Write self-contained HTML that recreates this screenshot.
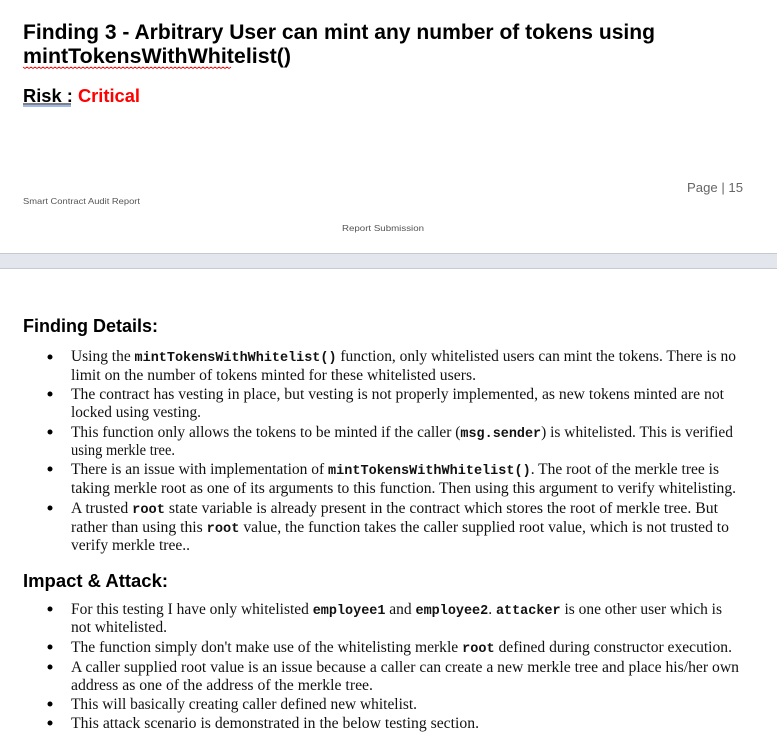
<!DOCTYPE html>
<html><head><meta charset="utf-8"><style>
html,body{margin:0;padding:0;background:#fff;width:777px;height:756px;overflow:hidden}
svg{display:block}
.h{font-family:"Liberation Sans",sans-serif;font-weight:bold;fill:#000}
.t{font-family:"Liberation Serif",serif;font-size:15.5px;fill:#111}
.m{font-family:"Liberation Mono",monospace;font-weight:bold;font-size:13.5px}
</style></head><body>
<svg width="777" height="756" xmlns="http://www.w3.org/2000/svg">
<text class="h" x="23" y="39" font-size="21" textLength="632" lengthAdjust="spacingAndGlyphs">Finding 3 - Arbitrary User can mint any number of tokens using</text>
<text class="h" x="23" y="63" font-size="21" textLength="268" lengthAdjust="spacingAndGlyphs">mintTokensWithWhitelist()</text>
<path d="M23 67 l2 1.5 l2 -1.5 l2 1.5 l2 -1.5 l2 1.5 l2 -1.5 l2 1.5 l2 -1.5 l2 1.5 l2 -1.5 l2 1.5 l2 -1.5 l2 1.5 l2 -1.5 l2 1.5 l2 -1.5 l2 1.5 l2 -1.5 l2 1.5 l2 -1.5 l2 1.5 l2 -1.5 l2 1.5 l2 -1.5 l2 1.5 l2 -1.5 l2 1.5 l2 -1.5 l2 1.5 l2 -1.5 l2 1.5 l2 -1.5 l2 1.5 l2 -1.5 l2 1.5 l2 -1.5 l2 1.5 l2 -1.5 l2 1.5 l2 -1.5 l2 1.5 l2 -1.5 l2 1.5 l2 -1.5 l2 1.5 l2 -1.5 l2 1.5 l2 -1.5 l2 1.5 l2 -1.5 l2 1.5 l2 -1.5 l2 1.5 l2 -1.5 l2 1.5 l2 -1.5 l2 1.5 l2 -1.5 l2 1.5 l2 -1.5 l2 1.5 l2 -1.5 l2 1.5 l2 -1.5 l2 1.5 l2 -1.5 l2 1.5 l2 -1.5 l2 1.5 l2 -1.5 l2 1.5 l2 -1.5 l2 1.5 l2 -1.5 l2 1.5 l2 -1.5 l2 1.5 l2 -1.5 l2 1.5 l2 -1.5 l2 1.5 l2 -1.5 l2 1.5 l2 -1.5 l2 1.5 l2 -1.5 l2 1.5 l2 -1.5 l2 1.5 l2 -1.5 l2 1.5 l2 -1.5 l2 1.5 l2 -1.5 l2 1.5 l2 -1.5 l2 1.5 l2 -1.5 l2 1.5 l2 -1.5 l2 1.5 l2 -1.5 l2 1.5 l2 -1.5" stroke="#e00" fill="none" stroke-width="0.8"/>
<line x1="23" y1="104" x2="71" y2="104" stroke="#000" stroke-width="1"/>
<line x1="23" y1="106" x2="71" y2="106" stroke="#3a6fd8" stroke-width="1"/>
<text class="h" x="23" y="102" font-size="18.5" textLength="117" lengthAdjust="spacingAndGlyphs">Risk : <tspan fill="#ff0000">Critical</tspan></text>
<text x="23" y="204" font-family="Liberation Sans,sans-serif" font-size="8.5" fill="#555" textLength="117" lengthAdjust="spacingAndGlyphs">Smart Contract Audit Report</text>
<text x="687" y="192" font-family="Liberation Sans,sans-serif" font-size="12.5" fill="#666" textLength="56" lengthAdjust="spacingAndGlyphs">Page | 15</text>
<text x="342" y="231" font-family="Liberation Sans,sans-serif" font-size="8.5" fill="#555" textLength="82" lengthAdjust="spacingAndGlyphs">Report Submission</text>
<rect x="0" y="253" width="777" height="15" fill="#e3e6ec"/>
<line x1="0" y1="253.5" x2="777" y2="253.5" stroke="#c6c9cf"/>
<line x1="0" y1="268.5" x2="777" y2="268.5" stroke="#c6c9cf"/>
<text class="h" x="23" y="332" font-size="18.5" textLength="135" lengthAdjust="spacingAndGlyphs">Finding Details:</text>
<g fill="#000">
<circle cx="50" cy="357" r="2.5"/><circle cx="50" cy="394" r="2.5"/><circle cx="50" cy="432" r="2.5"/><circle cx="50" cy="469" r="2.5"/><circle cx="50" cy="508" r="2.5"/>
<circle cx="50" cy="609" r="2.5"/><circle cx="50" cy="647" r="2.5"/><circle cx="50" cy="667" r="2.5"/><circle cx="50" cy="704" r="2.5"/><circle cx="50" cy="723" r="2.5"/>
</g>
<text class="t" x="71" y="361" textLength="665" lengthAdjust="spacingAndGlyphs">Using the <tspan class="m">mintTokensWithWhitelist()</tspan> function, only whitelisted users can mint the tokens. There is no</text>
<text class="t" x="71" y="380" textLength="405" lengthAdjust="spacingAndGlyphs">limit on the number of tokens minted for these whitelisted users.</text>
<text class="t" x="71" y="399" textLength="653" lengthAdjust="spacingAndGlyphs">The contract has vesting in place, but vesting is not properly implemented, as new tokens minted are not</text>
<text class="t" x="71" y="417" textLength="130" lengthAdjust="spacingAndGlyphs">locked using vesting.</text>
<text class="t" x="71" y="437" textLength="662" lengthAdjust="spacingAndGlyphs">This function only allows the tokens to be minted if the caller (<tspan class="m">msg.sender</tspan>) is whitelisted. This is verified</text>
<text class="t" x="71" y="455" textLength="104" lengthAdjust="spacingAndGlyphs">using merkle tree.</text>
<text class="t" x="71" y="474" textLength="648" lengthAdjust="spacingAndGlyphs">There is an issue with implementation of <tspan class="m">mintTokensWithWhitelist()</tspan>. The root of the merkle tree is</text>
<text class="t" x="71" y="493" textLength="665" lengthAdjust="spacingAndGlyphs">taking merkle root as one of its arguments to this function. Then using this argument to verify whitelisting.</text>
<text class="t" x="71" y="513" textLength="647" lengthAdjust="spacingAndGlyphs">A trusted <tspan class="m">root</tspan> state variable is already present in the contract which stores the root of merkle tree. But</text>
<text class="t" x="71" y="532" textLength="658" lengthAdjust="spacingAndGlyphs">rather than using this <tspan class="m">root</tspan> value, the function takes the caller supplied root value, which is not trusted to</text>
<text class="t" x="71" y="550" textLength="119" lengthAdjust="spacingAndGlyphs">verify merkle tree..</text>
<text class="h" x="23" y="587" font-size="18.5" textLength="145" lengthAdjust="spacingAndGlyphs">Impact &amp; Attack:</text>
<text class="t" x="71" y="614" textLength="651" lengthAdjust="spacingAndGlyphs">For this testing I have only whitelisted <tspan class="m">employee1</tspan> and <tspan class="m">employee2</tspan>. <tspan class="m">attacker</tspan> is one other user which is</text>
<text class="t" x="71" y="632" textLength="96" lengthAdjust="spacingAndGlyphs">not whitelisted.</text>
<text class="t" x="71" y="652" textLength="661" lengthAdjust="spacingAndGlyphs">The function simply don't make use of the whitelisting merkle <tspan class="m">root</tspan> defined during constructor execution.</text>
<text class="t" x="71" y="672" textLength="668" lengthAdjust="spacingAndGlyphs">A caller supplied root value is an issue because a caller can create a new merkle tree and place his/her own</text>
<text class="t" x="71" y="690" textLength="302" lengthAdjust="spacingAndGlyphs">address as one of the address of the merkle tree.</text>
<text class="t" x="71" y="709" textLength="346" lengthAdjust="spacingAndGlyphs">This will basically creating caller defined new whitelist.</text>
<text class="t" x="71" y="728" textLength="408" lengthAdjust="spacingAndGlyphs">This attack scenario is demonstrated in the below testing section.</text>
</svg>
</body></html>
